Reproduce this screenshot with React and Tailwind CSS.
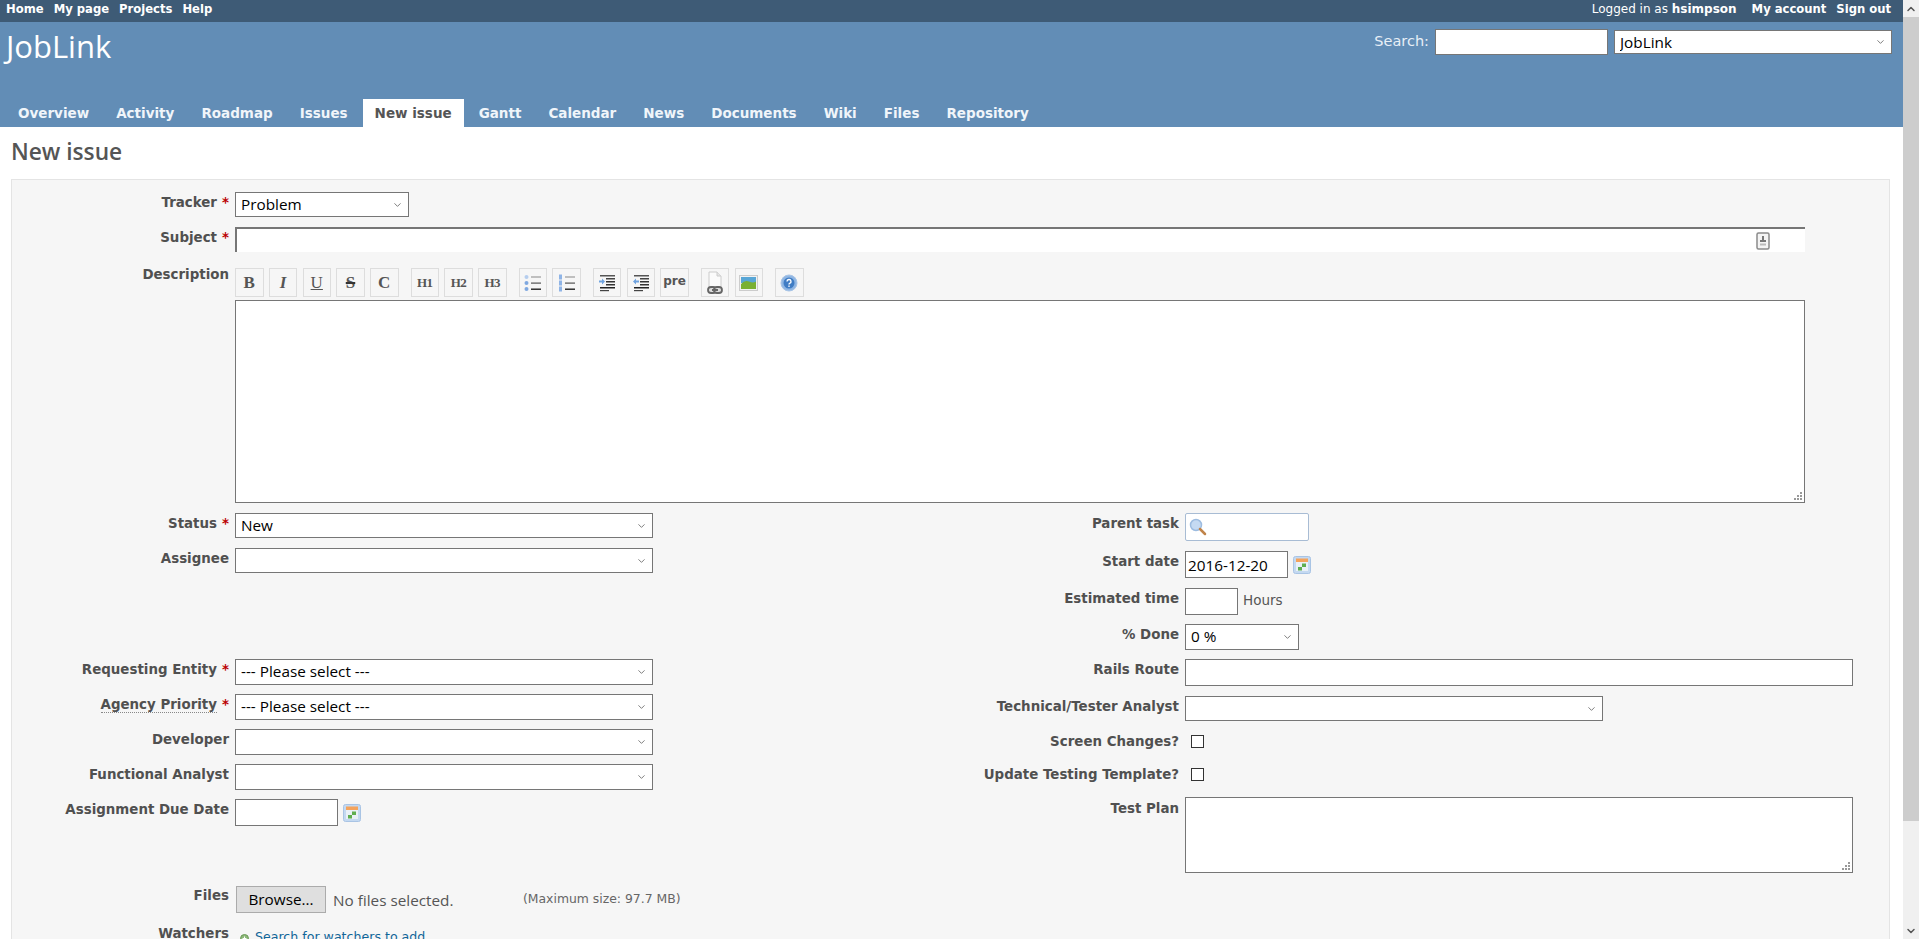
import { ChevronDown, ChevronUp } from "lucide-react";

const sans = "font-['DejaVu_Sans',sans-serif]";
const ctrlFont = "font-['Open_Sans',sans-serif]";

const topLeft = ["Home", "My page", "Projects", "Help"];
const tabs = ["Overview", "Activity", "Roadmap", "Issues", "New issue", "Gantt", "Calendar", "News", "Documents", "Wiki", "Files", "Repository"];

function Select({ value = "", className = "", h = "h-[26px]" }) {
  return (
    <span className={`relative block ${className} ${h}`}>
      <select
        defaultValue={value}
        className={`block w-full h-full appearance-none bg-white border border-[#767676] pl-[5px] pb-[2px] text-[15.3px] text-black ${ctrlFont}`}
      >
        <option value={value}>{value}</option>
      </select>
      <ChevronDown className="absolute right-[6px] top-1/2 -translate-y-1/2 w-[11px] h-[11px] text-[#444] pointer-events-none" strokeWidth={1.5} />
    </span>
  );
}

function Input({ className = "", value = "" }) {
  return (
    <input
      type="text"
      defaultValue={value}
      className={`block bg-white border border-[#767676] px-[2px] text-[15.3px] text-black ${ctrlFont} ${className}`}
    />
  );
}

function Field({ label, required, width, className = "", labelClass = "pt-[2px]", titled, children }) {
  return (
    <div className={`flex items-start ${className}`}>
      <label className={`${width} shrink-0 mr-[6px] text-right text-[13.4px] leading-[18px] font-bold text-[#505050] ${labelClass}`}>
        <span className={titled ? "border-b border-dotted border-[#888]" : ""}>{label}</span>
        {required && <span className="text-[#bb0000] ml-[5px]">*</span>}
      </label>
      {children}
    </div>
  );
}

function Grip() {
  return (
    <svg width="9" height="9" viewBox="0 0 9 9" className="absolute right-[2px] bottom-[2px] pointer-events-none">
      <g fill="#999">
        <rect x="6" y="0" width="2" height="2" />
        <rect x="3" y="3" width="2" height="2" />
        <rect x="6" y="3" width="2" height="2" />
        <rect x="0" y="6" width="2" height="2" />
        <rect x="3" y="6" width="2" height="2" />
        <rect x="6" y="6" width="2" height="2" />
      </g>
    </svg>
  );
}

function CalendarIcon() {
  return (
    <svg width="18" height="18" viewBox="0 0 18 18" className="ml-[5px] mt-[5px] shrink-0">
      <rect x="0.5" y="0.5" width="17" height="17" rx="2" fill="#c4d9f1" stroke="#a9c4e4" />
      <rect x="3" y="2.5" width="12" height="3.5" fill="#f4a35c" />
      <rect x="3" y="6" width="12" height="9" fill="#e9f0f7" />
      <rect x="9" y="7.5" width="4" height="3.5" fill="#5fae50" />
      <rect x="5" y="11" width="4" height="3.5" fill="#5fae50" />
    </svg>
  );
}

function ToolBtn({ children, className = "" }) {
  return (
    <span className={`flex items-center justify-center w-[28.5px] h-[29px] border border-[#dddddd] bg-[#f6f6f6] text-[#555] ${className}`}>
      {children}
    </span>
  );
}

const serif = "font-['Liberation_Serif',serif] font-bold";

function ListIcon({ numbered }) {
  return (
    <svg width="18" height="18" viewBox="0 0 18 18">
      {[3, 9, 15].map((y, i) =>
        numbered ? (
          <rect key={y} x="1" y={y - 2.5} width="3" height="5" fill="#8fb4e6" />
        ) : (
          <circle key={y} cx="2.5" cy={y} r="2" fill={i === 0 ? "#b5cdee" : "#7fa8e0"} />
        )
      )}
      <rect x="7" y="2.5" width="10" height="1" fill="#888" />
      <rect x="7" y="8.5" width="10" height="1.2" fill="#555" />
      <rect x="7" y="14.5" width="10" height="1.4" fill="#222" />
    </svg>
  );
}

function IndentIcon({ out }) {
  return (
    <svg width="18" height="18" viewBox="0 0 18 18">
      <rect x="2" y="1" width="15" height="1.5" fill="#555" />
      <rect x="8" y="4" width="9" height="1.5" fill="#444" />
      <rect x="8" y="7" width="9" height="1.5" fill="#333" />
      <rect x="8" y="10" width="9" height="1.5" fill="#333" />
      <rect x="2" y="13" width="15" height="1.5" fill="#222" />
      <rect x="2" y="16" width="9" height="1.2" fill="#444" />
      {out ? (
        <path d="M1 7.5 L4 4.5 V6.5 H7 V8.5 H4 V10.5 Z" fill="#6fa3e0" />
      ) : (
        <path d="M7 7.5 L4 4.5 V6.5 H1 V8.5 H4 V10.5 Z" fill="#6fa3e0" />
      )}
    </svg>
  );
}

function Toolbar() {
  return (
    <div className="flex gap-[12px]">
      <div className="flex gap-[5.25px]">
        <ToolBtn><span className={`${serif} text-[17px]`}>B</span></ToolBtn>
        <ToolBtn><span className={`${serif} italic text-[17px]`}>I</span></ToolBtn>
        <ToolBtn><span className="font-['Liberation_Serif',serif] underline text-[17px]">U</span></ToolBtn>
        <ToolBtn><span className={`${serif} line-through decoration-[1.5px] decoration-[#333] text-[17px] px-[3px]`}>S</span></ToolBtn>
        <ToolBtn><span className={`${serif} text-[17px]`}>C</span></ToolBtn>
      </div>
      <div className="flex gap-[5.25px]">
        <ToolBtn><span className={`${serif} text-[13px] tracking-[-0.5px]`}>H1</span></ToolBtn>
        <ToolBtn><span className={`${serif} text-[13px] tracking-[-0.5px]`}>H2</span></ToolBtn>
        <ToolBtn><span className={`${serif} text-[13px] tracking-[-0.5px]`}>H3</span></ToolBtn>
      </div>
      <div className="flex gap-[5.25px]">
        <ToolBtn><ListIcon /></ToolBtn>
        <ToolBtn><ListIcon numbered /></ToolBtn>
      </div>
      <div className="flex gap-[5.25px]">
        <ToolBtn><IndentIcon /></ToolBtn>
        <ToolBtn><IndentIcon out /></ToolBtn>
        <ToolBtn><span className="font-bold text-[12px] -mt-[3px]">pre</span></ToolBtn>
      </div>
      <div className="flex gap-[5.25px]">
        <ToolBtn>
          <svg width="20" height="24" viewBox="0 0 20 24">
            <path d="M4 1 H12 L16 5 V21 H4 Z" fill="#fbfbfb" stroke="#ccc" />
            <path d="M12 1 V5 H16" fill="#e6e6e6" stroke="#ccc" />
            <rect x="3" y="16" width="8" height="6" rx="3" fill="#ddd" stroke="#666" strokeWidth="1.8" />
            <rect x="9" y="16" width="8" height="6" rx="3" fill="#ddd" stroke="#666" strokeWidth="1.8" />
            <rect x="7" y="18" width="6" height="2" fill="#666" />
          </svg>
        </ToolBtn>
        <ToolBtn>
          <svg width="19" height="16" viewBox="0 0 19 16">
            <rect x="0.5" y="0.5" width="18" height="15" fill="#f2f2f2" stroke="#ccc" />
            <rect x="2" y="2" width="15" height="6" fill="#58a6d6" />
            <path d="M2 9 Q6 4.5 10 6.5 T17 6.5 V14 H2 Z" fill="#7ab032" />
          </svg>
        </ToolBtn>
      </div>
      <div className="flex">
        <ToolBtn>
          <svg width="18" height="18" viewBox="0 0 18 18">
            <circle cx="9" cy="9" r="8" fill="#8fb6e3" stroke="#a8c4e6" />
            <circle cx="9" cy="9" r="5.5" fill="#3f7cc4" />
            <path d="M7 7.5 A2 2 0 1 1 9.6 9.4 Q9 9.7 9 10.5" fill="none" stroke="#fff" strokeWidth="1.4" />
            <rect x="8.3" y="11.5" width="1.4" height="1.4" fill="#fff" />
          </svg>
        </ToolBtn>
      </div>
    </div>
  );
}

export default function App() {
  const leftLabel = "w-[217px]";
  const rightLabel = "w-[300px]";

  return (
    <div className={`flex w-[1919px] h-[939px] overflow-hidden bg-white ${sans}`}>
      <div className="w-[1903px] shrink-0">
        {/* top menu */}
        <div className="flex justify-between h-[22px] bg-[#3e5b76] pl-[6px] pr-[12px] text-[11.6px] leading-[18px] text-white">
          <div className="flex gap-[10px] font-bold">
            {topLeft.map((t) => <a key={t}>{t}</a>)}
          </div>
          <div className="flex">
            <span className="mr-[15px] text-[12px]">Logged in as <b>hsimpson</b></span>
            <a className="font-bold mr-[10px]">My account</a>
            <a className="font-bold">Sign out</a>
          </div>
        </div>

        {/* header */}
        <div className="flex flex-col justify-between h-[105px] bg-[#628db6] text-white">
          <div className="flex justify-between items-start">
            <h1 className="pl-[6px] pt-[6px] text-[31px] leading-[36px] font-medium font-['Open_Sans',sans-serif]">JobLink</h1>
            <div className="flex items-start pt-[7px] pr-[11px]">
              <span className="mt-[2px] mr-[6px] text-[14.5px] text-[#e8eff6]">Search:</span>
              <input type="text" className="w-[173px] h-[26px] bg-white border border-[#767676]" />
              <Select value="JobLink" className="w-[278px] ml-[6px] mt-[1px]" h="h-[24px]" />
            </div>
          </div>
          <div className="flex pl-[6px] gap-[3px]">
            {tabs.map((t) => (
              <a
                key={t}
                className={`block h-[28px] px-[12px] text-[13.5px] leading-[28px] font-bold ${t === "New issue" ? "bg-white text-[#555]" : "text-[#f0f5fa]"}`}
              >
                {t}
              </a>
            ))}
          </div>
        </div>

        {/* content */}
        <div className="pl-[11px] pr-[13px]">
          <h2 className="h-[52px] pt-[9px] text-[22.7px] leading-[32px] font-semibold text-[#555] font-['Open_Sans',sans-serif]">New issue</h2>

          <div className="h-[800px] border border-[#e4e4e4] bg-[#f6f6f6] pt-[12px]">
            <Field label="Tracker" required width={leftLabel}>
              <Select value="Problem" className="w-[174px]" h="h-[25px]" />
            </Field>

            <Field label="Subject" required width={leftLabel} className="mt-[10px]">
              <div className="relative w-[1570px] h-[25px]">
                <input type="text" className="block w-full h-full bg-white border-t-2 border-l-2 border-[#767676]" />
                <svg width="14" height="18" viewBox="0 0 14 18" className="absolute left-[1521px] top-[5px]">
                  <rect x="1" y="1" width="12" height="16" rx="1.5" fill="#f4f4f4" stroke="#8a8a8a" strokeWidth="1.5" />
                  <rect x="6" y="4" width="2" height="4" fill="#777" />
                  <rect x="4" y="8" width="6" height="2" fill="#777" />
                  <rect x="4" y="11.5" width="6" height="2" fill="#bbb" />
                </svg>
              </div>
            </Field>

            <Field label="Description" width={leftLabel} labelClass="-mt-[2px]" className="mt-[16px]">
              <div className="w-[1570px]">
                <Toolbar />
                <div className="relative mt-[3px]">
                  <textarea className="block w-full h-[203px] resize-none bg-white border border-[#767676]" />
                  <Grip />
                </div>
              </div>
            </Field>

            <div className="grid grid-cols-[867px_1fr] mt-[10px]">
              {/* left column */}
              <div>
                <Field label="Status" required width={leftLabel}>
                  <Select value="New" className="w-[418px]" h="h-[25px]" />
                </Field>
                <Field label="Assignee" width={leftLabel} className="mt-[10px]">
                  <Select className="w-[418px]" h="h-[25px]" />
                </Field>
                <Field label="Requesting Entity" required width={leftLabel} className="mt-[86px]">
                  <Select value="--- Please select ---" className="w-[418px]" />
                </Field>
                <Field label="Agency Priority" required titled width={leftLabel} className="mt-[9px]">
                  <Select value="--- Please select ---" className="w-[418px]" />
                </Field>
                <Field label="Developer" width={leftLabel} className="mt-[9px]">
                  <Select className="w-[418px]" />
                </Field>
                <Field label="Functional Analyst" width={leftLabel} className="mt-[9px]">
                  <Select className="w-[418px]" />
                </Field>
                <Field label="Assignment Due Date" width={leftLabel} className="mt-[9px]">
                  <Input className="w-[103px] h-[27px]" />
                  <CalendarIcon />
                </Field>
              </div>

              {/* right column */}
              <div>
                <Field label="Parent task" width={rightLabel}>
                  <div className="relative">
                    <input type="text" className="block w-[124px] h-[28px] bg-white border border-[#a8bcd4] rounded-[2px]" />
                    <svg width="18" height="18" viewBox="0 0 18 18" className="absolute left-[4px] top-[5px]">
                      <circle cx="7" cy="7" r="5.5" fill="#c5daf2" stroke="#9dbce0" strokeWidth="1.5" />
                      <path d="M11 11 L16 16" stroke="#c0844a" strokeWidth="2.5" strokeLinecap="round" />
                    </svg>
                  </div>
                </Field>
                <Field label="Start date" width={rightLabel} className="mt-[10px]">
                  <Input value="2016-12-20" className="w-[103px] h-[27px]" />
                  <CalendarIcon />
                </Field>
                <Field label="Estimated time" width={rightLabel} className="mt-[10px]">
                  <Input className="w-[53px] h-[27px]" />
                  <span className="ml-[5px] pt-[3px] text-[13.5px] leading-[18px] text-[#555]">Hours</span>
                </Field>
                <Field label="% Done" width={rightLabel} className="mt-[9px]">
                  <Select value="0 %" className="w-[114px]" />
                </Field>
                <Field label="Rails Route" width={rightLabel} className="mt-[9px]">
                  <Input className="w-[668px] h-[27px]" />
                </Field>
                <Field label="Technical/Tester Analyst" width={rightLabel} className="mt-[10px]">
                  <Select className="w-[418px]" h="h-[25px]" />
                </Field>
                <Field label="Screen Changes?" width={rightLabel} className="h-[33px] mt-[10px]">
                  <input type="checkbox" className="ml-[6px] mt-[4px] w-[13px] h-[13px] appearance-none border border-[#333] bg-white" />
                </Field>
                <Field label="Update Testing Template?" width={rightLabel} className="h-[33px]">
                  <input type="checkbox" className="ml-[6px] mt-[4px] w-[13px] h-[13px] appearance-none border border-[#333] bg-white" />
                </Field>
                <Field label="Test Plan" width={rightLabel} labelClass="pt-[3px]">
                  <div className="relative">
                    <textarea className="block w-[668px] h-[76px] resize-none bg-white border border-[#767676]" />
                    <Grip />
                  </div>
                </Field>
              </div>
            </div>

            <Field label="Files" width={leftLabel} labelClass="pt-[1px]" className="mt-[13px]">
              <button className={`w-[90px] h-[27px] ml-[1px] bg-[#dfdfdf] border border-[#ababab] text-[15.3px] text-black ${ctrlFont}`}>Browse...</button>
              <span className={`ml-[7px] pt-[2px] w-[190px] text-[15.3px] leading-[24px] text-[#555] ${ctrlFont}`}>No files selected.</span>
              <span className="pt-[4px] text-[12.4px] leading-[18px] text-[#666]">(Maximum size: 97.7 MB)</span>
            </Field>

            <Field label="Watchers" width={leftLabel} labelClass="pt-[1px]" className="mt-[11px]">
              <span className="flex items-center pl-[5px] pt-[5px] text-[12.6px] leading-[16px] text-[#116699]">
                <svg width="9" height="9" viewBox="0 0 9 9" className="mr-[6px] mt-[2px]">
                  <circle cx="4.5" cy="4.5" r="4" fill="#8db87a" stroke="#6b9a58" />
                  <path d="M2.5 4.5 H6.5 M4.5 2.5 V6.5" stroke="#fff" strokeWidth="1" />
                </svg>
                Search for watchers to add
              </span>
            </Field>
          </div>
        </div>
      </div>

      {/* scrollbar */}
      <div className="flex flex-col w-[16px] h-full bg-[#f0f0f0] text-[#555]">
        <div className="flex items-center justify-center h-[17px]"><ChevronUp className="w-[12px] h-[12px]" strokeWidth={3} /></div>
        <div className="h-[804px] bg-[#cdcdcd]" />
        <div className="flex-1" />
        <div className="flex items-center justify-center h-[17px]"><ChevronDown className="w-[12px] h-[12px]" strokeWidth={3} /></div>
      </div>
    </div>
  );
}
